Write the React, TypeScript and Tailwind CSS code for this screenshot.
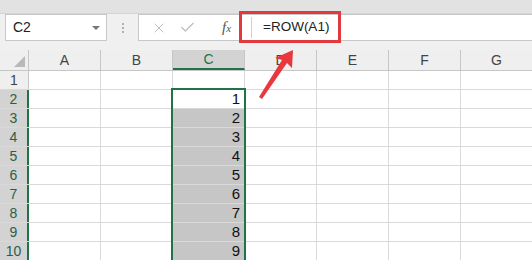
import { X, Check } from 'lucide-react';

const cols = ['A', 'B', 'C', 'D', 'E', 'F', 'G'];
const rows = [1, 2, 3, 4, 5, 6, 7, 8, 9, 10];

function FormulaBar() {
  return (
    <div className="bg-[#f0f0f0]">
      <div className="h-[14px] bg-[#e2e2e2] border-b border-[#d4d4d4]" />
      <div className="flex h-[27px] items-stretch">
        {/* name box */}
        <div className="ml-[5px] w-[102px] bg-white border border-[#c8c8c8] flex items-center justify-between pl-[7px] pr-[6px]">
          <span className="text-[14px] text-[#222]">C2</span>
          <span className="w-0 h-0 border-l-[4px] border-r-[4px] border-t-[4px] border-l-transparent border-r-transparent border-t-[#777]" />
        </div>
        <div className="w-[31px] flex flex-col items-center justify-center gap-[2px]">
          <span className="w-[2px] h-[2px] bg-[#b0b0b0]" />
          <span className="w-[2px] h-[2px] bg-[#b0b0b0]" />
          <span className="w-[2px] h-[2px] bg-[#b0b0b0]" />
        </div>
        {/* formula box */}
        <div className="flex-1 bg-white border border-[#c8c8c8] border-r-0 flex items-center">
          <div className="w-[112px] flex items-center">
            <X className="ml-[12px] w-[16px] h-[16px] text-[#bdbdbd]" strokeWidth={1.5} />
            <Check className="ml-[12px] w-[17px] h-[17px] text-[#bdbdbd]" strokeWidth={1.7} />
            <span className="ml-[26px] font-['Liberation_Serif'] italic text-[15px] text-[#555] leading-none">
              f<span className="text-[11px]">x</span>
            </span>
          </div>
          <div className="w-px h-[21px] bg-[#d0d0d0]" />
          <span className="ml-[11px] text-[13.5px] text-[#222]">=ROW(A1)</span>
        </div>
      </div>
      <div className="h-[9px]" />
    </div>
  );
}

function Grid() {
  return (
    <div className="relative">
      {/* column headers */}
      <div className="flex h-[21px] bg-[#efefef] border-b border-[#c6c6c6]">
        <div className="w-[29px] shrink-0 border-r border-[#c6c6c6] relative">
          <svg className="absolute right-[3px] bottom-[3px]" width="11" height="11">
            <polygon points="11,0 11,11 0,11" fill="#b9b9b9" />
          </svg>
        </div>
        {cols.map((c) => (
          <div
            key={c}
            className={
              c === 'C'
                ? 'w-[72px] shrink-0 flex items-center justify-center bg-[#d3d3d3] border-r border-[#c6c6c6] border-b-2 border-b-[#217346] text-[#217346] text-[14px]'
                : 'w-[72px] shrink-0 flex items-center justify-center border-r border-[#c6c6c6] text-[#444] text-[14px]'
            }
          >
            {c}
          </div>
        ))}
      </div>

      {rows.map((r) => (
        <div key={r} className="flex h-[19px] border-b border-[#d9d9d9]">
          <div
            className={
              r === 1
                ? 'w-[29px] shrink-0 flex items-center justify-center bg-[#efefef] border-r border-[#c6c6c6] text-[14px] text-[#444]'
                : 'w-[29px] shrink-0 flex items-center justify-center bg-[#d3d3d3] border-r-2 border-[#217346] text-[14px] text-[#2d5e45]'
            }
          >
            {r}
          </div>
          {cols.map((c) => {
            const sel = c === 'C' && r >= 3;
            return (
              <div
                key={c}
                className={
                  sel
                    ? 'w-[72px] shrink-0 bg-[#c6c6c6] border-r border-[#d9d9d9] flex items-end justify-end pr-[4px] text-[15px] text-[#111] leading-[18px]'
                    : 'w-[72px] shrink-0 bg-white border-r border-[#d9d9d9] flex items-end justify-end pr-[4px] text-[15px] text-[#111] leading-[18px]'
                }
              >
                {c === 'C' && r >= 2 ? r - 1 : ''}
              </div>
            );
          })}
        </div>
      ))}

      {/* selection outline C2:C10 */}
      <div className="absolute left-[171px] top-[38px] w-[75px] h-[240px] border-2 border-[#217346]" />
    </div>
  );
}

export default function App() {
  return (
    <div className="relative w-[532px] h-[260px] overflow-hidden bg-white font-['Liberation_Sans',sans-serif]">
      <FormulaBar />
      <Grid />

      {/* annotation: red box + arrow */}
      <div className="absolute left-[239px] top-[11px] w-[102px] h-[32px] border-[3px] border-[#e0393e]" />
      <svg className="absolute left-0 top-0" width="532" height="260">
        <polygon
          points="293,50 292,68 287,63 262,99 259,97 282,60 275,58"
          fill="#e8383d"
        />
      </svg>
    </div>
  );
}
